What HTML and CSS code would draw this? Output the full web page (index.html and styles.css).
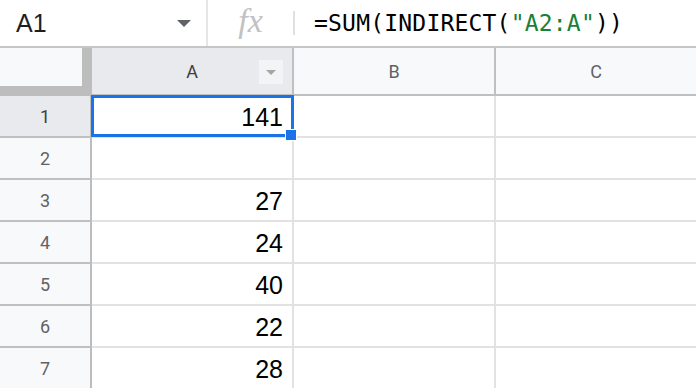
FILE: index.html
```html
<!DOCTYPE html>
<html lang="en">
<head>
    <meta charset="UTF-8">
    <meta name="viewport" content="width=device-width, initial-scale=1.0">
    <title>Sheet</title>
    <link rel="stylesheet" href="styles.css">
</head>
<body>
    <div class="formula-bar">
        <div class="name-box">
            <span class="cell-ref">A1</span>
            <svg class="arrow" width="16" height="7" viewBox="0 0 16 7"><polygon points="1,0 15,0 8,7" fill="#5f6368"/></svg>
        </div>
        <div class="fx">fx</div>
        <div class="sep"></div>
        <div class="formula">=SUM(INDIRECT(<span class="str">"A2:A"</span>))</div>
    </div>

    <div class="sheet">
        <div class="corner"></div>
        <div class="col-head selected">A
            <span class="filter"><svg width="10" height="5" viewBox="0 0 10 5"><polygon points="0,0 10,0 5,5" fill="#a6a6a6"/></svg></span>
        </div>
        <div class="col-head">B</div>
        <div class="col-head">C</div>

        <div class="row-head selected">1</div>
        <div class="cell">141</div>
        <div class="cell"></div>
        <div class="cell"></div>

        <div class="row-head">2</div>
        <div class="cell"></div>
        <div class="cell"></div>
        <div class="cell"></div>

        <div class="row-head">3</div>
        <div class="cell">27</div>
        <div class="cell"></div>
        <div class="cell"></div>

        <div class="row-head">4</div>
        <div class="cell">24</div>
        <div class="cell"></div>
        <div class="cell"></div>

        <div class="row-head">5</div>
        <div class="cell">40</div>
        <div class="cell"></div>
        <div class="cell"></div>

        <div class="row-head">6</div>
        <div class="cell">22</div>
        <div class="cell"></div>
        <div class="cell"></div>

        <div class="row-head">7</div>
        <div class="cell">28</div>
        <div class="cell"></div>
        <div class="cell"></div>

        <!-- active cell outline -->
        <div class="selection"></div>
        <div class="handle"></div>
    </div>
</body>
</html>
```

FILE: styles.css
```css
body {
    margin: 0;
    width: 696px;
    height: 388px;
    overflow: hidden;
    background-color: #fff;
    font-family: Roboto, Arial, sans-serif;
}

.formula-bar {
    display: flex;
    align-items: center;
    height: 46px;
    border-bottom: 2px solid #c4c7c5;
}

.name-box {
    display: flex;
    align-items: center;
    width: 208px;
    height: 100%;
    padding-left: 16px;
    box-sizing: border-box;
    border-right: 2px solid #e6e6e6;
}

.cell-ref {
    font-family: "Liberation Sans", Arial, sans-serif;
    font-size: 25px;
    color: #1f1f1f;
}

.arrow {
    margin-left: auto;
    margin-right: 14px;
}

.fx {
    width: 85px;
    text-align: center;
    font-family: "Liberation Serif", serif;
    font-style: italic;
    font-size: 34px;
    color: #c2c2c2;
    margin-top: -4px;
}

.sep {
    width: 2px;
    height: 24px;
    background-color: #e0e0e0;
}

.formula {
    padding-left: 19px;
    font-family: "DejaVu Sans Mono", monospace;
    font-size: 23px;
    letter-spacing: 0.2px;
    color: #000;
}

.formula .str {
    color: #188038;
}

.sheet {
    position: relative;
    display: grid;
    grid-template-columns: 92px 202px 202px 202px;
    grid-template-rows: 48px repeat(7, 42px);
}

.sheet > div {
    box-sizing: border-box;
}

.corner {
    background-color: #f8f9fa;
    border-right: 10px solid #bdbdbd;
    border-bottom: 10px solid #bdbdbd;
}

.col-head {
    position: relative;
    display: flex;
    align-items: center;
    justify-content: center;
    background-color: #f8f9fa;
    border-right: 2px solid #c0c0c0;
    border-bottom: 2px solid #c0c0c0;
    font-size: 18px;
    color: #5f6368;
}

.col-head.selected,
.row-head.selected {
    background-color: #e8eaed;
    color: #3c4043;
}

.filter {
    position: absolute;
    left: 167px;
    top: 12px;
    width: 24px;
    height: 24px;
    display: flex;
    align-items: center;
    justify-content: center;
    background-color: #f3f4f5;
}

.row-head {
    display: flex;
    align-items: center;
    justify-content: center;
    background-color: #f8f9fa;
    border-right: 2px solid #bdbdbd;
    border-bottom: 2px solid #c0c0c0;
    font-size: 18px;
    color: #5f6368;
}

.cell {
    display: flex;
    align-items: center;
    justify-content: flex-end;
    padding: 2px 9px 0 0;
    border-right: 2px solid #e2e2e3;
    border-bottom: 2px solid #e2e2e3;
    font-family: "Liberation Sans", Arial, sans-serif;
    font-size: 25px;
    color: #000;
}

.selection {
    position: absolute;
    left: 91px;
    top: 47px;
    width: 203px;
    height: 42px;
    border: 3px solid #1a73e8;
    box-sizing: border-box;
}

.handle {
    position: absolute;
    left: 285px;
    top: 81px;
    width: 12px;
    height: 12px;
    background-color: #1a73e8;
    border: 1px solid #fff;
}
```
